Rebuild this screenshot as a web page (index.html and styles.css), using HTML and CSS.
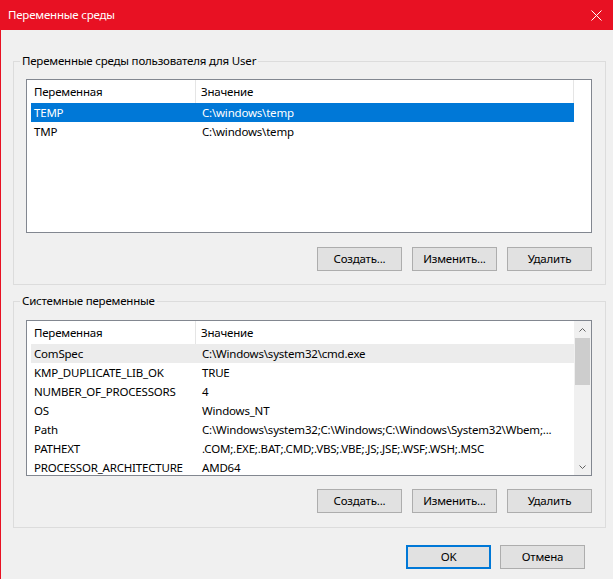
FILE: index.html
```html
<!DOCTYPE html>
<html lang="ru">
<head>
<meta charset="utf-8">
<title>Переменные среды</title>
<link rel="stylesheet" href="styles.css">
</head>
<body>
<div class="window">
  <div class="titlebar">
    <span class="title">Переменные среды</span>
    <svg class="close" width="11" height="11" viewBox="0 0 11 11"><path d="M0.5 0.5 L10.5 10.5 M10.5 0.5 L0.5 10.5" stroke="#fff" stroke-width="1" fill="none"/></svg>
  </div>
  <div class="content">
    <fieldset class="group">
      <legend>Переменные среды пользователя для User</legend>
      <div class="list list-user">
        <div class="cols">
          <div class="row header"><div class="c1">Переменная</div><div class="c2">Значение</div></div>
          <div class="row selected"><div class="c1">TEMP</div><div class="c2">C:\windows\temp</div></div>
          <div class="row"><div class="c1">TMP</div><div class="c2">C:\windows\temp</div></div>
        </div>
      </div>
      <div class="btns">
        <button class="btn">Создать...</button>
        <button class="btn">Изменить...</button>
        <button class="btn">Удалить</button>
      </div>
    </fieldset>
    <fieldset class="group group-sys">
      <legend>Системные переменные</legend>
      <div class="list list-sys">
        <div class="cols">
          <div class="row header"><div class="c1">Переменная</div><div class="c2">Значение</div></div>
          <div class="row inactive"><div class="c1">ComSpec</div><div class="c2">C:\Windows\system32\cmd.exe</div></div>
          <div class="row"><div class="c1">KMP_DUPLICATE_LIB_OK</div><div class="c2">TRUE</div></div>
          <div class="row"><div class="c1">NUMBER_OF_PROCESSORS</div><div class="c2">4</div></div>
          <div class="row"><div class="c1">OS</div><div class="c2">Windows_NT</div></div>
          <div class="row"><div class="c1">Path</div><div class="c2">C:\Windows\system32;C:\Windows;C:\Windows\System32\Wbem;...</div></div>
          <div class="row"><div class="c1">PATHEXT</div><div class="c2">.COM;.EXE;.BAT;.CMD;.VBS;.VBE;.JS;.JSE;.WSF;.WSH;.MSC</div></div>
          <div class="row"><div class="c1">PROCESSOR_ARCHITECTURE</div><div class="c2">AMD64</div></div>
        </div>
        <div class="scrollbar">
          <div class="arrow"><svg width="7" height="4" viewBox="0 0 7 4"><path d="M0.5 3.5 L3.5 0.5 L6.5 3.5" stroke="#606060" fill="none"/></svg></div>
          <div class="track"><div class="thumb"></div></div>
          <div class="arrow"><svg width="7" height="4" viewBox="0 0 7 4"><path d="M0.5 0.5 L3.5 3.5 L6.5 0.5" stroke="#606060" fill="none"/></svg></div>
        </div>
      </div>
      <div class="btns">
        <button class="btn">Создать...</button>
        <button class="btn">Изменить...</button>
        <button class="btn">Удалить</button>
      </div>
    </fieldset>
    <div class="footer">
      <button class="btn primary">OK</button>
      <button class="btn">Отмена</button>
    </div>
  </div>
</div>
</body>
</html>
```
FILE: styles.css
```css
html, body {
  margin: 0;
  padding: 0;
}
body {
  width: 613px;
  height: 579px;
  overflow: hidden;
  background: #f0f0f0;
  font-family: "Noto Sans", "Open Sans", sans-serif;
  font-size: 11.5px;
  letter-spacing: -0.2px;
  color: #000;
}
.window {
  height: 579px;
  border-left: 1px solid #e81123;
  box-sizing: border-box;
  display: flex;
  flex-direction: column;
}
.titlebar {
  height: 30px;
  flex: none;
  background: #e81123;
  color: #fff;
  display: flex;
  align-items: center;
  justify-content: space-between;
  padding: 0 11px 0 7px;
}
.title {
  line-height: 16px;
}
.close {
  display: block;
}
.content {
  padding: 23px 7px 0 12px;
}
.group {
  margin: 0;
  border: 1px solid #dcdcdc;
  padding: 10px 13px 13px 12px;
  min-width: 0;
}
.group legend {
  padding: 0 2px;
  margin-left: -6px;
  line-height: 16px;
}
.group-sys {
  margin-top: 8px;
  padding-top: 11px;
  padding-bottom: 14px;
}
.list {
  border: 1px solid #828790;
  background: #fff;
  display: flex;
  overflow: hidden;
}
.list-user {
  height: 154px;
  box-sizing: border-box;
}
.list-sys {
  height: 156px;
  box-sizing: border-box;
}
.cols {
  flex: 1;
  padding-left: 4px;
  overflow: hidden;
}
.row {
  display: flex;
  width: 543px;
  height: 19px;
  line-height: 19px;
  white-space: nowrap;
}
.row .c1 {
  width: 165px;
  flex: none;
  padding-left: 3px;
  box-sizing: border-box;
}
.row .c2 {
  flex: 1;
  padding-left: 6px;
  overflow: hidden;
}
.row.header {
  height: 23px;
  line-height: 23px;
}
.row.header .c1 {
  border-right: 1px solid #e5e5e5;
}
.row.header .c2 {
  padding-left: 5px;
}
.list-user .row.header .c2 {
  border-right: 1px solid #e5e5e5;
}
.row.selected {
  background: #0078d7;
  color: #fff;
}
.row.inactive {
  background: #ececec;
}
.scrollbar {
  width: 17px;
  flex: none;
  background: #f0f0f0;
  display: flex;
  flex-direction: column;
}
.arrow {
  height: 17px;
  display: flex;
  align-items: center;
  justify-content: center;
  flex: none;
}
.track {
  flex: 1;
}
.thumb {
  height: 47px;
  margin: 0 1px;
  background: #cdcdcd;
}
.btns {
  display: flex;
  justify-content: flex-end;
  gap: 10px;
  margin-top: 14px;
}
.group-sys .btns {
  margin-top: 13px;
}
.btn {
  width: 85px;
  height: 24px;
  box-sizing: border-box;
  border: 1px solid #adadad;
  background: #e1e1e1;
  font-family: "Noto Sans", "Open Sans", sans-serif;
  font-size: 11.5px;
  letter-spacing: -0.2px;
  color: #000;
  padding: 0;
  margin: 0;
  line-height: 20px;
}
.btn.primary {
  border: 2px solid #0078d7;
}
.footer {
  display: flex;
  justify-content: flex-end;
  gap: 9px;
  margin-top: 17px;
  padding-right: 21px;
}
```
